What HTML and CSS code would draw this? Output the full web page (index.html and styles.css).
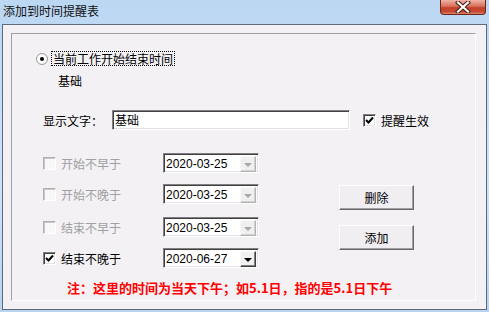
FILE: index.html
```html
<!DOCTYPE html>
<html lang="zh-CN">
<head>
  <meta charset="UTF-8">
  <title>添加到时间提醒表</title>
  <link rel="stylesheet" href="styles.css">
</head>
<body>
  <div class="window">
    <div class="titlebar">
      <span class="title">添加到时间提醒表</span>
      <div class="close">
        <svg width="16" height="12" viewBox="0 0 16 12">
          <path d="M3 1.5 L13 10.5 M13 1.5 L3 10.5" stroke="#4a1d14" stroke-width="4.2" stroke-linecap="square"/>
          <path d="M3 1.5 L13 10.5 M13 1.5 L3 10.5" stroke="#ffffff" stroke-width="2.2" stroke-linecap="square"/>
        </svg>
      </div>
    </div>

    <div class="client">
      <div class="group">
        <div class="radio-row">
          <span class="radio"><span class="dot"></span></span>
          <span class="focus-label">当前工作开始结束时间</span>
        </div>
        <div class="sub">基础</div>

        <div class="text-row">
          <span class="field-label">显示文字：</span>
          <div class="input">基础</div>
          <span class="check checked">
            <svg width="9" height="9" viewBox="0 0 9 9"><path d="M1 4 L3.5 6.5 L8 1.5" stroke="#000" stroke-width="2" fill="none"/></svg>
          </span>
          <span class="check-label">提醒生效</span>
        </div>

        <div class="dates">
          <div class="date-col">
            <div class="date-row disabled">
              <span class="check"></span>
              <span class="date-label">开始不早于</span>
              <div class="combo"><span class="combo-text">2020-03-25</span><span class="drop"><span class="arrow"></span></span></div>
            </div>
            <div class="date-row disabled gap-b">
              <span class="check"></span>
              <span class="date-label">开始不晚于</span>
              <div class="combo"><span class="combo-text">2020-03-25</span><span class="drop"><span class="arrow"></span></span></div>
            </div>
            <div class="date-row disabled">
              <span class="check"></span>
              <span class="date-label">结束不早于</span>
              <div class="combo"><span class="combo-text">2020-03-25</span><span class="drop"><span class="arrow"></span></span></div>
            </div>
            <div class="date-row">
              <span class="check checked">
                <svg width="9" height="9" viewBox="0 0 9 9"><path d="M1 4 L3.5 6.5 L8 1.5" stroke="#000" stroke-width="2" fill="none"/></svg>
              </span>
              <span class="date-label">结束不晚于</span>
              <div class="combo"><span class="combo-text">2020-06-27</span><span class="drop"><span class="arrow"></span></span></div>
            </div>
          </div>
          <div class="btn-col">
            <div class="btn">删除</div>
            <div class="btn">添加</div>
          </div>
        </div>

        <div class="note">注：这里的时间为当天下午；如5.1日，指的是5.1日下午</div>
      </div>
    </div>
  </div>
</body>
</html>
```

FILE: styles.css
```css
body {
  margin: 0;
  width: 489px;
  height: 312px;
  overflow: hidden;
  font-family: "Noto Sans CJK SC", sans-serif;
  font-size: 12px;
  color: #000;
  background: linear-gradient(#bcd7f2, #cde2f7 60%, #b9d3ee);
}
.titlebar {
  height: 24px;
  display: flex;
  justify-content: space-between;
  align-items: flex-start;
}
.title {
  padding: 2px 0 0 3px;
  line-height: 17px;
  font-size: 12px;
  color: #111;
}
.close {
  width: 44px;
  height: 14px;
  margin-right: 3px;
  border: 1px solid #6b2519;
  border-top: none;
  border-radius: 0 0 4px 4px;
  background: linear-gradient(#eeb2a4, #d8705c 45%, #c2412b 55%, #c84a33 85%, #e08a74);
  display: flex;
  justify-content: center;
  align-items: center;
}
.client {
  margin: 0 2px;
  height: 286px;
  box-sizing: border-box;
  border: 1px solid #5d6b7a;
  background: #f3f1f4;
  padding: 8px 0 0 8px;
}
.group {
  width: 465px;
  height: 268px;
  box-sizing: border-box;
  border-top: 1px solid #a0a0a0;
  border-left: 1px solid #a0a0a0;
  border-right: 1px solid #ffffff;
  border-bottom: 1px solid #ffffff;
}
.radio-row {
  margin-top: 18px;
  padding-left: 24px;
  height: 13px;
  display: flex;
  align-items: center;
}
.radio {
  width: 10px;
  height: 10px;
  border-radius: 50%;
  border: 1px solid #9c9c9c;
  background: radial-gradient(#ffffff 55%, #dcdcdc);
  display: flex;
  justify-content: center;
  align-items: center;
  margin-right: 4px;
}
.dot {
  width: 4px;
  height: 4px;
  border-radius: 50%;
  background: #000;
}
.focus-label {
  outline: 1px dotted #000;
  line-height: 13px;
  height: 13px;
  padding: 0 1px;
}
.sub {
  margin-top: 9px;
  padding-left: 46px;
  line-height: 13px;
  height: 13px;
}
.text-row {
  margin-top: 23px;
  padding-left: 31px;
  height: 20px;
  display: flex;
  align-items: center;
}
.field-label {
  width: 69px;
}
.input {
  width: 238px;
  height: 20px;
  box-sizing: border-box;
  border: 1px solid;
  border-color: #808080 #ffffff #ffffff #808080;
  box-shadow: inset 1px 1px #404040, inset -1px -1px #e4e2e6;
  background: #fff;
  padding-left: 2px;
  line-height: 18px;
}
.check {
  width: 13px;
  height: 13px;
  box-sizing: border-box;
  border: 1px solid;
  border-color: #808080 #ffffff #ffffff #808080;
  box-shadow: inset 1px 1px #404040, inset -1px -1px #e4e2e6;
  background: #fff;
  display: flex;
  justify-content: center;
  align-items: center;
}
.text-row .check {
  margin-left: 13px;
}
.check-label {
  margin-left: 5px;
}
.dates {
  margin-top: 23px;
  display: flex;
}
.date-col {
  padding-left: 31px;
}
.date-row {
  height: 20px;
  display: flex;
  align-items: center;
  margin-bottom: 11px;
}
.date-row.gap-b {
  margin-bottom: 13px;
}
.date-row:last-child {
  margin-bottom: 0;
}
.date-label {
  margin-left: 5px;
  width: 102px;
}
.disabled .date-label {
  color: #a0a0a0;
}
.disabled .check {
  border-color: #b0b0b0 #ffffff #ffffff #b0b0b0;
  box-shadow: inset 1px 1px #c8c8c8;
  background: #f8f8f8;
}
.combo {
  width: 96px;
  height: 20px;
  box-sizing: border-box;
  border: 1px solid;
  border-color: #808080 #ffffff #ffffff #808080;
  box-shadow: inset 1px 1px #404040, inset -1px -1px #e4e2e6;
  background: #fff;
  display: flex;
  padding: 2px;
}
.combo-text {
  flex: 1;
  font-family: "Liberation Sans", sans-serif;
  font-size: 12px;
  line-height: 16px;
}
.drop {
  width: 16px;
  height: 16px;
  box-sizing: border-box;
  border: 1px solid;
  border-color: #f8f8f8 #404040 #404040 #f8f8f8;
  box-shadow: inset -1px -1px #808080;
  background: #f0f0f0;
  display: flex;
  justify-content: center;
  align-items: center;
}
.arrow {
  width: 0;
  height: 0;
  border-left: 4px solid transparent;
  border-right: 4px solid transparent;
  border-top: 4px solid #000;
  margin-top: 1px;
}
.disabled .drop {
  border-color: #f8f8f8 #b4b4b4 #b4b4b4 #f8f8f8;
  box-shadow: inset -1px -1px #d0d0d0;
}
.disabled .arrow {
  border-top-color: #a8a8a8;
}
.btn-col {
  margin-left: 80px;
  padding-top: 32px;
}
.btn {
  width: 75px;
  height: 25px;
  box-sizing: border-box;
  border: 1px solid;
  border-color: #ffffff #696969 #696969 #ffffff;
  box-shadow: inset -1px -1px #a0a0a0;
  background: #f0eef1;
  display: flex;
  justify-content: center;
  align-items: center;
  margin-bottom: 15px;
}
.note {
  margin-top: 12px;
  padding-left: 55px;
  color: #ff0000;
  font-weight: bold;
  font-size: 13px;
  line-height: 16px;
}
```
